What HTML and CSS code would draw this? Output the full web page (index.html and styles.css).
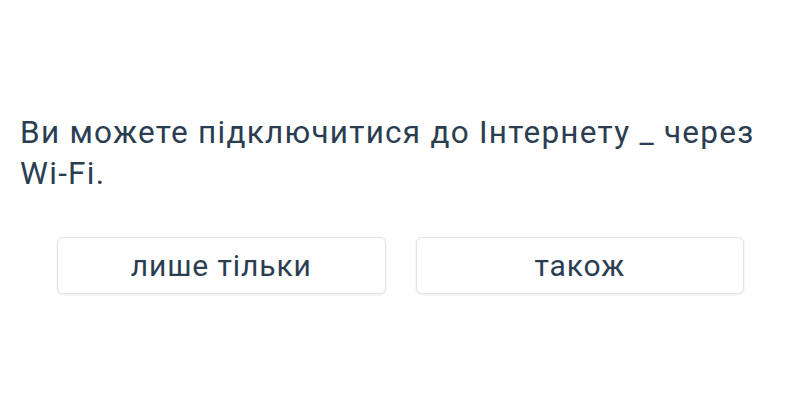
FILE: index.html
```html
<!DOCTYPE html>
<html lang="uk">

<head>
    <meta charset="UTF-8">
    <meta name="viewport" content="width=device-width, initial-scale=1.0">
    <title>Вправа</title>
    <link rel="stylesheet" href="styles.css">
</head>

<body>
    <div class="question">
        <p class="question-text">Ви можете підключитися до Інтернету _ через Wi-Fi.</p>

        <div class="answers">
            <button class="answer">лише тільки</button>
            <button class="answer">також</button>
        </div>
    </div>
</body>

</html>
```

FILE: styles.css
```css
body {
    font-family: Roboto, "Noto Sans", sans-serif;
    background-color: #ffffff;
    color: #2b3e51;
    margin: 0;
}

.question {
    height: 400px;
    box-sizing: border-box;
    padding: 112px 20px 0;
}

.question-text {
    margin: 0;
    font-size: 31.5px;
    line-height: 41px;
    letter-spacing: 0.04em;
}

.answers {
    display: grid;
    grid-template-columns: 1fr 1fr;
    gap: 30px;
    margin: 43px 36px 0 37px;
}

.answer {
    height: 57px;
    font-family: inherit;
    font-size: 30px;
    letter-spacing: 0.03em;
    color: #2b3e51;
    background-color: #ffffff;
    border: 1px solid #e2e2e2;
    border-radius: 6px;
    box-shadow: 0 1px 3px rgba(0, 0, 0, 0.08);
    cursor: pointer;
}
```
